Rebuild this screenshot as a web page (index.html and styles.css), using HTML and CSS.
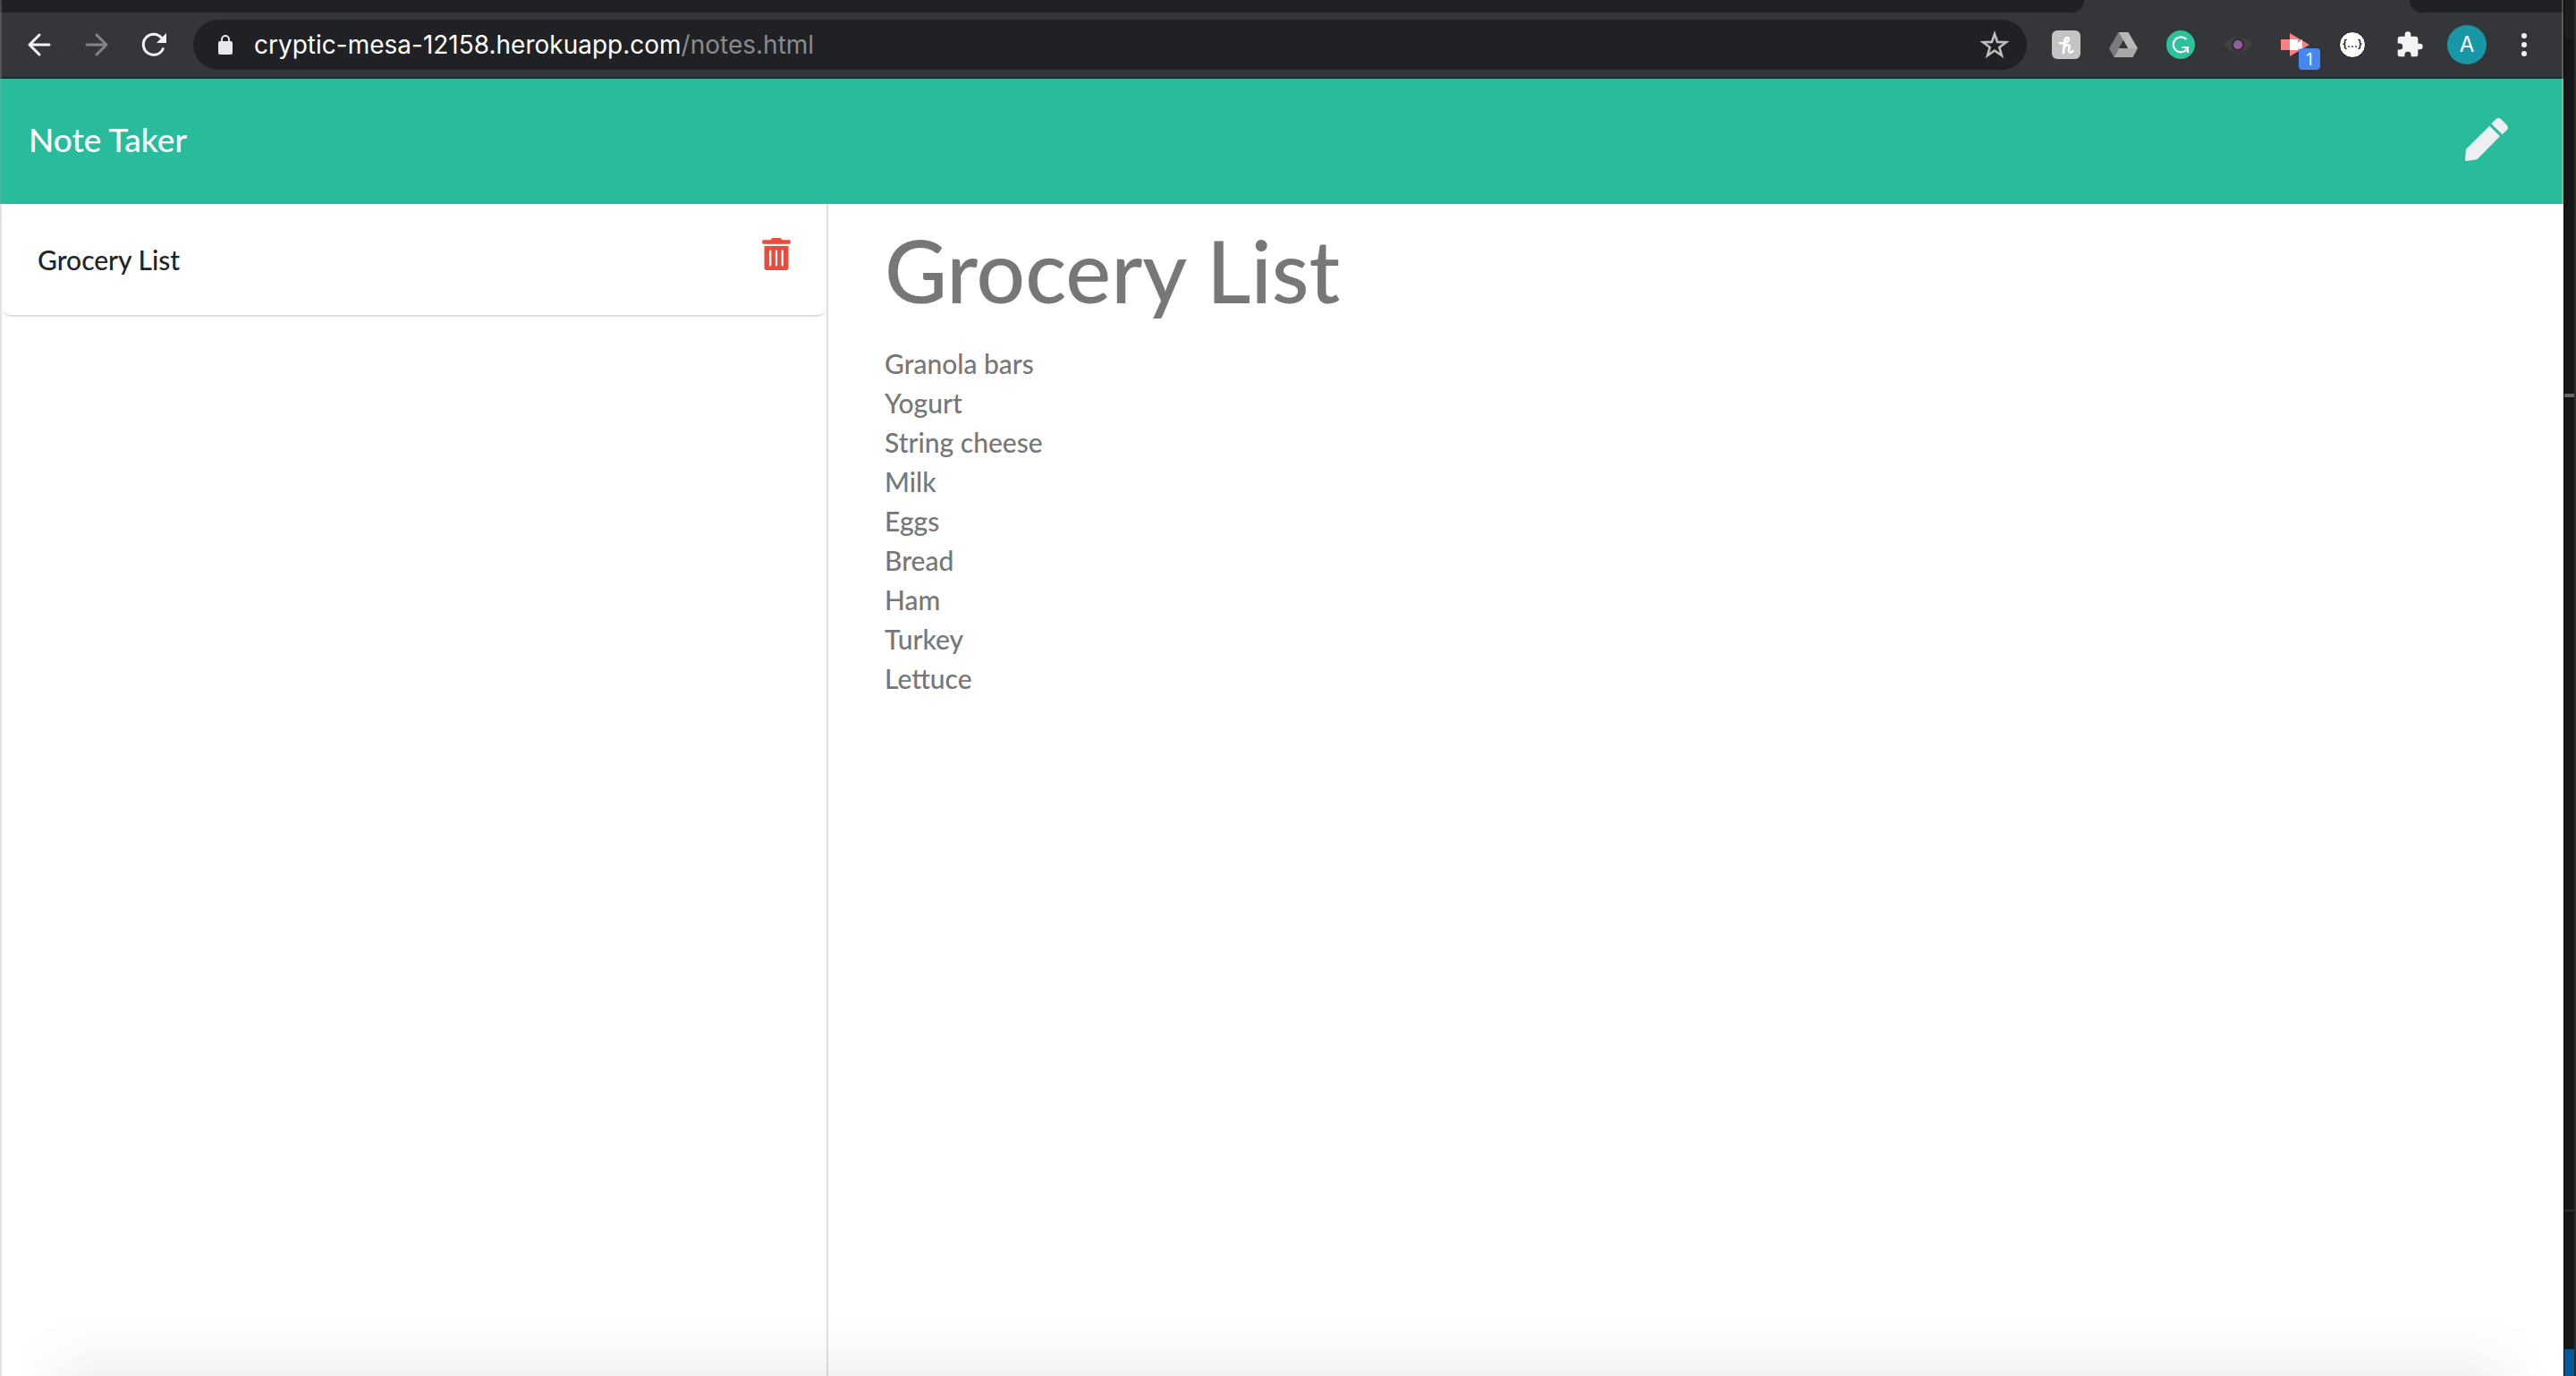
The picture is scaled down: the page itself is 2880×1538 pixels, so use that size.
FILE: index.html
```html
<!DOCTYPE html>
<html lang="en">
<head>
<meta charset="utf-8">
<title>Note Taker</title>
<link rel="stylesheet" href="styles.css">
</head>
<body>
<div class="screen">
  <div class="window">
    <header class="chrome">
      <div class="tabs"><div class="tabs-left"></div><div class="tabs-right"></div></div>
      <div class="toolbar">
        <div class="tools">
          <button class="tool" aria-label="Back"><svg width="32" height="32" viewBox="0 0 32 32" fill="none" stroke="#f1f3f4" stroke-width="3" stroke-linecap="round" stroke-linejoin="round"><path d="M27 16H5M16 5 5 16l11 11"/></svg></button>
          <button class="tool" aria-label="Forward"><svg width="32" height="32" viewBox="0 0 32 32" fill="none" stroke="#838486" stroke-width="3" stroke-linecap="round" stroke-linejoin="round"><path d="M5 16h22M16 5l11 11-11 11"/></svg></button>
          <button class="tool" aria-label="Reload"><svg width="32" height="32" viewBox="0 0 32 32"><path d="M26.300 20.500A11.500 11.500 0 1 1 24.500 8.300" fill="none" stroke="#f1f3f4" stroke-width="3" stroke-linecap="round"/><path d="M30 3v11H19z" fill="#f1f3f4"/></svg></button>
        </div>
        <div class="omnibox">
          <svg class="lock" width="16" height="22" viewBox="0 0 16 22"><rect y="7" width="16" height="15" rx="2" fill="#e8e8e8"/><path d="M4 8V5a4 4 0 0 1 8 0v3" fill="none" stroke="#e8e8e8" stroke-width="2"/></svg>
          <div class="url"><span class="host">cryptic-mesa-12158.herokuapp.com</span>/notes.html</div>
          <button class="star" aria-label="Bookmark"><svg width="32" height="32" viewBox="0 0 32 32"><path d="m16 4 3.100 8.900 9.900.3-7.700 5.700L24 28l-8-5.500L8 28l2.700-9.100L3 13.200l9.900-.3z" fill="none" stroke="#bdbebf" stroke-width="2.600"/></svg></button>
        </div>
        <div class="tools">
          <button class="tool" aria-label="Honey"><svg width="32" height="32" viewBox="0 0 32 32"><rect width="32" height="32" rx="6" fill="#c4c4c4"/><path d="M9 14c4 1 10-1 10-4 0-2.500-4-2.500-4.500 1L13 25M13.500 20c1-3.500 6-5.500 6-2 0 3-1.500 6.500 1 6.500 1.500 0 2.500-.5 3-1.500" fill="none" stroke="#fff" stroke-width="2.600" stroke-linecap="round"/></svg></button>
          <button class="tool" aria-label="Drive"><svg width="32" height="32" viewBox="0 0 32 32"><path d="M10.500 2 0 20l5.500 10L16 11z" fill="#7b7b7b"/><path d="M10.500 2h11L32 20H21z" fill="#b9b9b9"/><path d="M11 20h21l-5.500 10h-21z" fill="#a8a8a8"/><path d="m16 11 5 9H11z" fill="#35363a"/></svg></button>
          <button class="tool" aria-label="Grammarly"><svg width="32" height="32" viewBox="0 0 32 32"><circle cx="16" cy="16" r="16" fill="#2bc29c"/><path d="M22.500 10A8.500 8.500 0 1 0 23 21M17.500 19H24v6" fill="none" stroke="#fff" stroke-width="2.200"/></svg></button>
          <button class="tool" aria-label="Eye"><svg width="32" height="32" viewBox="0 0 32 32"><defs><linearGradient id="iris" x2="1" y2="1"><stop stop-color="#4f74b5"/><stop offset="1" stop-color="#d1498f"/></linearGradient></defs><path d="M0 16q16-17 32 0-16 17-32 0z" fill="#45413f"/><circle cx="16" cy="16" r="7.500" fill="#303034"/><circle cx="16" cy="16" r="5" fill="url(#iris)"/></svg></button>
          <button class="tool" aria-label="Meeting, 1 notice"><svg width="32" height="32" viewBox="0 0 32 32"><path d="M0 10h10V3l22 13-22 13v-7H0z" fill="#fa8084"/><path d="M10 10h9v4l5-4v12h-2l-3-2v2h-9z" fill="#fff"/></svg><span class="badge">1</span></button>
          <button class="tool" aria-label="JSON viewer"><span class="json">{...}</span></button>
          <button class="tool" aria-label="Extensions"><svg width="32" height="32" viewBox="0 0 24 24"><path d="M20.500 11H19V7c0-1.100-.9-2-2-2h-4V3.500a2.500 2.500 0 0 0-5 0V5H4c-1.100 0-2 .9-2 2v3.800h1.500a2.700 2.700 0 0 1 0 5.400H2V20c0 1.100.9 2 2 2h3.800v-1.500a2.700 2.700 0 0 1 5.400 0V22H17c1.100 0 2-.9 2-2v-4h1.500a2.500 2.500 0 0 0 0-5z" fill="#f1f3f4"/></svg></button>
          <button class="tool" aria-label="Profile"><span class="avatar">A</span></button>
          <button class="tool" aria-label="Menu"><svg width="32" height="32" viewBox="0 0 32 32" fill="#f1f3f4"><circle cx="16" cy="6" r="3"/><circle cx="16" cy="16" r="3"/><circle cx="16" cy="26" r="3"/></svg></button>
        </div>
      </div>
    </header>
    <nav class="navbar">
      <a class="brand" href="#">Note Taker</a>
      <button class="new-note" aria-label="New note"><svg width="48" height="48" viewBox="0 0 144 144" fill="#ecf0f1"><path d="M3 104 82 26l35 35-77 78-37 5q-3 0-3-3z"/><path d="m88 19 15-15q9-8 18 0l19 19q8 9 0 17l-15 15z"/></svg></button>
    </nav>
    <main class="content">
      <ul class="note-list">
        <li class="note-item">
          <a class="note-link" href="#">Grocery List</a>
          <button class="delete" aria-label="Delete note"><svg width="32" height="36" viewBox="0 0 448 512" fill="#e74c3c"><path d="M32 464a48 48 0 0 0 48 48h288a48 48 0 0 0 48-48V128H32zm272-256a16 16 0 0 1 32 0v224a16 16 0 0 1-32 0zm-96 0a16 16 0 0 1 32 0v224a16 16 0 0 1-32 0zm-96 0a16 16 0 0 1 32 0v224a16 16 0 0 1-32 0zM432 32H312l-9.400-18.700A24 24 0 0 0 281.100 0H166.800a23.720 23.720 0 0 0-21.400 13.300L136 32H16A16 16 0 0 0 0 48v32a16 16 0 0 0 16 16h416a16 16 0 0 0 16-16V48a16 16 0 0 0-16-16z"/></svg></button>
        </li>
      </ul>
      <form class="note">
        <input class="note-title" aria-label="Note title" value="Grocery List" readonly>
        <textarea class="note-text" aria-label="Note text" readonly>Granola bars
Yogurt
String cheese
Milk
Eggs
Bread
Ham
Turkey
Lettuce</textarea>
      </form>
    </main>
    <div class="dock-shadow"></div>
  </div>
  <aside class="behind">
    <div class="behind-top"></div>
    <div class="behind-upper"></div>
    <div class="behind-lower"></div>
    <div class="behind-panel"></div>
    <div class="behind-status"></div>
  </aside>
</div>
</body>
</html>
```
FILE: styles.css
```css
* { box-sizing: border-box; }
body { margin: 0; font-family: Lato, "Liberation Sans", sans-serif; font-weight: 500; }
button { display: flex; align-items: center; justify-content: center; padding: 0; border: 0; background: none; cursor: pointer; font-family: inherit; }
a { text-decoration: none; }
svg { display: block; }

.screen { display: flex; height: 100vh; overflow: hidden; background: #161616; }
.window { position: relative; display: flex; flex-direction: column; flex: 1; min-width: 0; background: #fff; }
.window::after { content: ""; position: absolute; inset: 0; border-left: 2px solid rgba(160, 160, 160, .3); border-right: 2px solid rgba(255, 255, 255, .2); pointer-events: none; }

.chrome { background: #35363a; border-bottom: 2px solid #28292c; font-family: Inter, "Liberation Sans", sans-serif; font-weight: 400; }
.tabs { display: flex; justify-content: space-between; height: 14px; }
.tabs-left { width: 2330px; background: #202124; border-bottom-right-radius: 16px; }
.tabs-right { width: 172px; background: #202124; border-bottom-left-radius: 16px; }
.toolbar { display: flex; align-items: center; gap: 12px; height: 72px; padding: 0 12px; }
.tools { display: flex; }
.tool { position: relative; width: 64px; height: 56px; }
.omnibox { display: flex; align-items: center; flex: 1; height: 56px; padding: 0 20px 0 28px; border-radius: 28px; background: #202124; }
.url { flex: 1; padding-left: 24px; color: #8a8b8d; font-size: 28px; line-height: 56px; }
.host { color: #fff; }
.badge { position: absolute; left: 36px; top: 32px; width: 24px; height: 24px; border-radius: 4px; background: #4688f1; color: #fff; font-size: 18px; line-height: 26px; }
.json { width: 30px; height: 30px; border: 1px solid #111; border-radius: 50%; background: #fff; color: #111; font-size: 12px; font-weight: 600; line-height: 26px; }
.avatar { width: 44px; height: 44px; border-radius: 50%; background: #1897a6; color: #fff; font-size: 24px; line-height: 44px; }

.navbar { display: flex; align-items: center; justify-content: space-between; height: 140px; padding: 0 62px 4px 32px; background: #29bc9c; }
.brand { color: #fff; font-size: 37px; line-height: 56px; }
.new-note { height: 56px; }

.content { display: flex; flex: 1; }
.note-list { width: 926px; margin: 0; padding: 0 0 0 2px; border-right: 2px solid #dfdfdf; list-style: none; }
.note-item { display: flex; justify-content: space-between; height: 126px; padding: 38px 40px; border-bottom: 2px solid #dfdfdf; border-radius: 0 0 10px 10px; }
.note-link { color: #212529; font-size: 30px; line-height: 48px; }
.delete { height: 36px; }
.note { display: flex; flex: 1; flex-direction: column; gap: 24px; padding: 16px 64px 16px 63px; }
.note-title, .note-text { width: 100%; padding: 0; border: 0; outline: 0; background: none; color: #777; font-family: inherit; font-weight: inherit; }
.note-title { height: 116px; font-size: 96px; line-height: 116px; }
.note-text { flex: 1; font-size: 30px; line-height: 44px; resize: none; }

.dock-shadow { position: absolute; left: 0; right: 0; bottom: 0; height: 68px; background: linear-gradient(transparent, rgba(0, 0, 0, .015) 50%, rgba(0, 0, 0, .05)); mask-image: linear-gradient(90deg, transparent 20px, #000 110px, #000 calc(100% - 110px), transparent calc(100% - 20px)); pointer-events: none; }

.behind { display: flex; flex-direction: column; width: 14px; border-left: 1px solid #000; border-right: 2px solid #2c2c2c; background: #161616; }
.behind-top { height: 44px; background: #1c1c1c; }
.behind-upper { height: 400px; border-bottom: 4px solid #666; }
.behind-lower { flex: 1; border-bottom: 2px solid #2e2e2e; }
.behind-panel { height: 154px; }
.behind-status { height: 30px; background: #005a9c; }
```
